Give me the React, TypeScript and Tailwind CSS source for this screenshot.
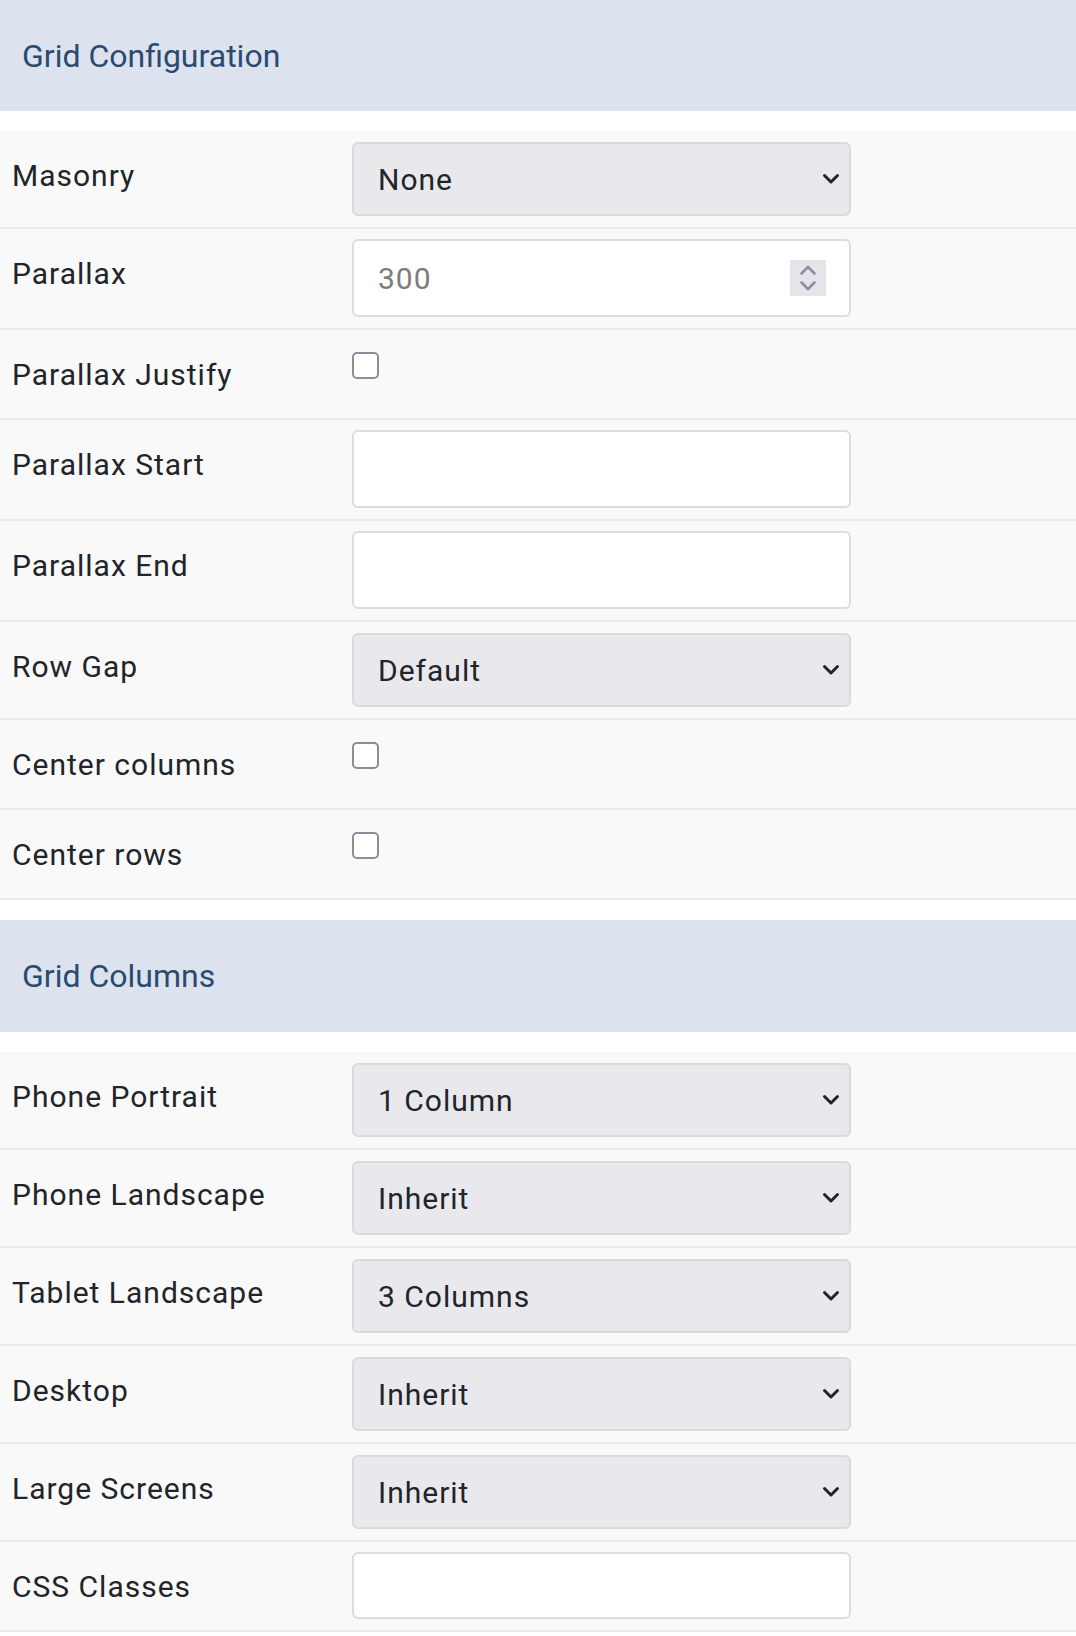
import React from "react";

type Field =
  | { label: string; kind: "select"; value: string }
  | { label: string; kind: "number"; value: string }
  | { label: string; kind: "text"; small?: boolean }
  | { label: string; kind: "checkbox" };

const configFields: Field[] = [
  { label: "Masonry", kind: "select", value: "None" },
  { label: "Parallax", kind: "number", value: "300" },
  { label: "Parallax Justify", kind: "checkbox" },
  { label: "Parallax Start", kind: "text" },
  { label: "Parallax End", kind: "text" },
  { label: "Row Gap", kind: "select", value: "Default" },
  { label: "Center columns", kind: "checkbox" },
  { label: "Center rows", kind: "checkbox" },
];

const columnFields: Field[] = [
  { label: "Phone Portrait", kind: "select", value: "1 Column" },
  { label: "Phone Landscape", kind: "select", value: "Inherit" },
  { label: "Tablet Landscape", kind: "select", value: "3 Columns" },
  { label: "Desktop", kind: "select", value: "Inherit" },
  { label: "Large Screens", kind: "select", value: "Inherit" },
  { label: "CSS Classes", kind: "text", small: true },
];

function Chevron() {
  return (
    <svg width="18" height="12" viewBox="0 0 18 12" fill="none">
      <path d="M2.5 2.5 L9 9 L15.5 2.5" stroke="#212529" strokeWidth="3" strokeLinecap="round" strokeLinejoin="round" />
    </svg>
  );
}

function Spinner() {
  return (
    <div className="flex h-[36px] w-[36px] items-center justify-center bg-[#e4e4ea]">
      <svg width="36" height="36" viewBox="0 0 36 36" fill="none">
        <path d="M11.5 13.5 L18 7 L24.5 13.5" stroke="#8f8d9c" strokeWidth="2.6" strokeLinecap="round" strokeLinejoin="round" />
        <path d="M11.5 22.5 L18 29 L24.5 22.5" stroke="#8f8d9c" strokeWidth="2.6" strokeLinecap="round" strokeLinejoin="round" />
      </svg>
    </div>
  );
}

function Control({ field }: { field: Field }) {
  if (field.kind === "select") {
    return (
      <div className="py-[11px]">
        <div className="flex h-[74px] w-[499px] items-center justify-between rounded-[6px] border-2 border-[#dadada] bg-[#e9e9ed] pl-[24px] pr-[9px] text-[30px] tracking-[1px] text-[#212529]">
          <span>{field.value}</span>
          <Chevron />
        </div>
      </div>
    );
  }
  if (field.kind === "number") {
    return (
      <div className="pt-[10px] pb-[11px]">
        <div className="flex h-[78px] w-[499px] items-center justify-between rounded-[6px] border-2 border-[#dcdcdc] bg-white pl-[24px] pr-[23px] text-[30px] tracking-[1px] text-[#7c7c7c]">
          <span>{field.value}</span>
          <Spinner />
        </div>
      </div>
    );
  }
  if (field.kind === "text") {
    return (
      <div className={field.small ? "pt-[10px]" : "pt-[10px] pb-[11px]"}>
        <div
          className={
            field.small
              ? "h-[67px] w-[499px] rounded-[6px] border-2 border-[#dcdcdc] bg-white"
              : "h-[78px] w-[499px] rounded-[6px] border-2 border-[#dcdcdc] bg-white"
          }
        />
      </div>
    );
  }
  return (
    <div className="pt-[22px]">
      <div className="h-[27px] w-[27px] rounded-[5px] border-[2.5px] border-[#8e8c9c] bg-white" />
    </div>
  );
}

function Row({ field }: { field: Field }) {
  return (
    <div className="flex items-start border-b-2 border-[#ebebeb] bg-[#f9f9f9]">
      <div className="w-[352px] shrink-0 pl-[12px] pt-[22px] pb-[21px] text-[30px] leading-[45px] tracking-[1px] text-[#212529]">
        {field.label}
      </div>
      <Control field={field} />
    </div>
  );
}

function Section({ title, fields, tall }: { title: string; fields: Field[]; tall?: boolean }) {
  return (
    <section>
      <div
        className={
          tall
            ? "flex h-[112px] items-center bg-[#dce3ef] pl-[22px] text-[32px] text-[#2b4a6f]"
            : "flex h-[111px] items-center bg-[#dce3ef] pl-[22px] text-[32px] text-[#2b4a6f]"
        }
      >
        {title}
      </div>
      <div className="mt-[20px]">
        {fields.map((f) => (
          <Row key={f.label} field={f} />
        ))}
      </div>
    </section>
  );
}

export default function App() {
  return (
    <div className="min-h-[1636px] w-full bg-white font-['Roboto','Liberation_Sans',sans-serif]">
      <Section title="Grid Configuration" fields={configFields} />
      <div className="h-[20px]" />
      <Section title="Grid Columns" fields={columnFields} tall />
    </div>
  );
}
